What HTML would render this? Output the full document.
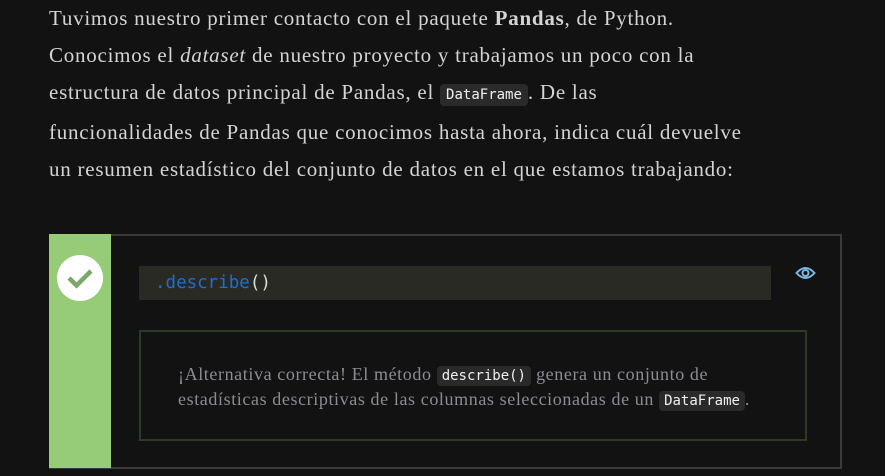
<!DOCTYPE html>
<html><head><meta charset="utf-8"><style>
body{margin:0;background:#121212;width:885px;height:476px;overflow:hidden;font-family:"Liberation Serif",serif;}
p.q{position:absolute;left:49px;top:0px;margin:0;white-space:nowrap;font-size:21px;letter-spacing:0.75px;line-height:37px;color:#d4d4d4;}
code{font-family:"DejaVu Sans Mono",monospace;font-size:14px;letter-spacing:0;background:#2a2a2a;color:#f0f0f0;padding:3px 6px;border-radius:4px;}
.box{position:absolute;left:49px;top:234px;width:791px;height:231px;border:2px solid #3a3a3a;border-left:none;}
.green{position:absolute;left:49px;top:234px;width:62px;height:234px;background:#96cc78;}
.circ{position:absolute;left:57px;top:255px;width:46px;height:46px;border-radius:50%;background:#fff;}
.code{position:absolute;left:139px;top:266px;width:632px;height:34px;background:#2a2a24;font-family:"DejaVu Sans Mono",monospace;font-size:17.5px;line-height:34px;color:#1a6fd6;}
.fb{position:absolute;left:139px;top:330px;width:664px;height:107px;border:2px solid #2e3a26;}
.fb p{margin:0;position:absolute;left:37px;top:31px;white-space:nowrap;font-size:18px;letter-spacing:0.6px;line-height:23px;color:#8c8c96;}
.fb code{font-size:14px;padding:2px 5px;}
</style></head><body>
<p class="q">Tuvimos nuestro primer contacto con el paquete <b>Pandas</b>, de Python.<br>Conocimos el <i>dataset</i> de nuestro proyecto y trabajamos un poco con la<br>estructura de datos principal de Pandas, el <code>DataFrame</code>. De las<br>funcionalidades de Pandas que conocimos hasta ahora, indica cuál devuelve<br>un resumen estadístico del conjunto de datos en el que estamos trabajando:</p>
<div class="box"></div>
<div class="green"></div>
<div class="circ"><svg width="46" height="46" viewBox="0 0 46 46"><path d="M12 23 L19.5 30.5 L34 16" fill="none" stroke="#7aa868" stroke-width="4.5"/></svg></div>
<div class="code"><span style="padding-left:16px">.describe</span><span style="color:#ddd">()</span></div>
<svg style="position:absolute;left:795px;top:264px" width="21" height="18" viewBox="0 0 21 18"><path d="M1.5 9 Q10.5 -1 19.5 9 Q10.5 19 1.5 9Z" fill="none" stroke="#7ab8e0" stroke-width="2"/><circle cx="10.5" cy="9" r="3" fill="none" stroke="#7ab8e0" stroke-width="2"/></svg>
<div class="fb"><p>¡Alternativa correcta! El método <code>describe()</code> genera un conjunto de<br>estadísticas descriptivas de las columnas seleccionadas de un <code>DataFrame</code>.</p></div>
</body></html>
